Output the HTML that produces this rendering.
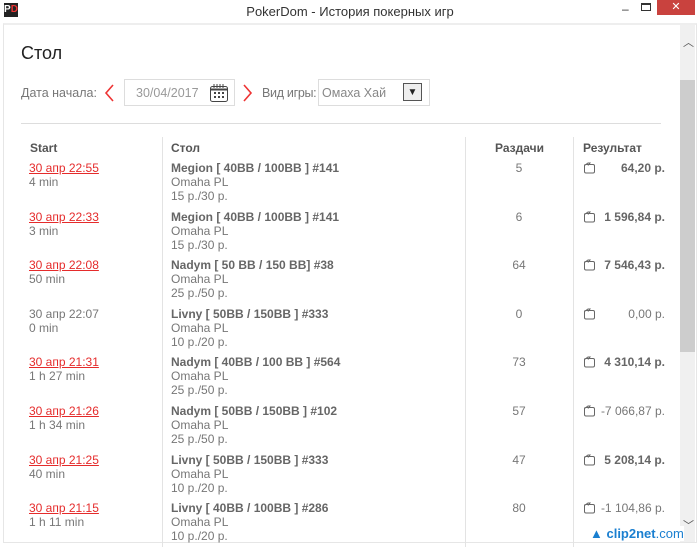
<!DOCTYPE html>
<html><head><meta charset="utf-8"><style>
*{margin:0;padding:0;box-sizing:border-box}
body{width:700px;height:547px;overflow:hidden;background:#fff;font-family:"Liberation Sans",sans-serif;color:#666;position:relative}
.tb{position:absolute;left:0;top:0;width:700px;height:23px;background:#fff}
.tt{position:absolute;left:0;width:700px;top:4px;text-align:center;font-size:13px;color:#333}
.logo{position:absolute;left:4px;top:3px;width:14px;height:14px;background:#222;color:#fff;font-size:10px;font-weight:bold;line-height:14px;text-align:center}
.logo b{color:#e33}
.cl{position:absolute;left:657px;top:0;width:38px;height:15px;background:#c9423e;color:#fff;text-align:center;font-size:11px;line-height:15px}
.frame{position:absolute;left:3px;top:23px;width:694px;height:520px;border:1px solid #e6e6e6;border-top:2px solid #eee}
.sb{position:absolute;left:680px;top:25px;width:15px;height:517px;background:#f0f0f0}
.th{position:absolute;left:680px;top:80px;width:15px;height:272px;background:#cdcdcd}
.a{position:absolute;font-size:12px}
h1{position:absolute;left:21px;top:43px;font-size:18px;font-weight:normal;color:#222}
.lbl{position:absolute;font-size:12.5px;color:#777;top:86px;white-space:nowrap}
.box{position:absolute;border:1px solid #ddd;background:#fff}
.hr{position:absolute;left:21px;top:123px;width:640px;height:1px;background:#ddd}
.vl{position:absolute;top:137px;width:1px;height:410px;background:#e3e3e3}
.hd{position:absolute;top:141px;font-size:12px;font-weight:bold;color:#555}
.r{position:absolute;font-size:12px;line-height:14px;color:#777;white-space:nowrap}
.lnk{color:#e52b2b;text-decoration:underline}
.b{font-weight:bold;color:#666}
</style></head><body>
<div class="tb"><div class="logo">P<b>D</b></div><div class="tt">PokerDom - История покерных игр</div>
<div class="a" style="left:622px;top:2px;color:#333">–</div>
<div style="position:absolute;left:641px;top:3px;width:10px;height:8px;border:1px solid #333;border-top-width:2px"></div>
<div class="cl">✕</div></div>
<div class="frame"></div>
<div class="sb"></div><div class="th"></div>
<div class="a" style="left:683px;top:34px;color:#555;font-size:11px">︿</div>
<div class="a" style="left:683px;top:517px;color:#555;font-size:11px">﹀</div>
<h1>Стол</h1>
<div class="lbl" style="left:21px">Дата начала:</div>
<svg style="position:absolute;left:103px;top:83px" width="12" height="20"><path d="M10 2 L3 10 L10 18" stroke="#e33" stroke-width="1.6" fill="none"/></svg>
<div class="box" style="left:124px;top:79px;width:111px;height:27px"></div>
<div class="lbl" style="left:136px;color:#999">30/04/2017</div>
<svg style="position:absolute;left:209px;top:83px" width="20" height="20"><rect x="1.5" y="3.5" width="17" height="15" rx="2" stroke="#444" fill="none"/><line x1="2" y1="6.5" x2="18" y2="6.5" stroke="#444" stroke-width="2"/><g fill="#444"><rect x="5" y="9" width="2" height="2"/><rect x="9" y="9" width="2" height="2"/><rect x="13" y="9" width="2" height="2"/><rect x="5" y="13" width="2" height="2"/><rect x="9" y="13" width="2" height="2"/><rect x="13" y="13" width="2" height="2"/></g><path d="M5 1v4M8 1v4M11 1v4M14 1v4" stroke="#444"/></svg>
<svg style="position:absolute;left:242px;top:83px" width="12" height="20"><path d="M2 2 L9 10 L2 18" stroke="#e33" stroke-width="1.6" fill="none"/></svg>
<div class="box" style="left:318px;top:79px;width:112px;height:27px"></div>
<div class="lbl" style="left:262px;letter-spacing:-0.3px">Вид игры:</div>
<div class="lbl" style="left:322px;color:#888">Омаха Хай</div>
<div style="position:absolute;left:403px;top:83px;width:19px;height:18px;border:1px solid #555;background:#eee;text-align:center;font-size:10px;line-height:17px;color:#222">▼</div>
<div class="hr"></div>
<div class="vl" style="left:162px"></div><div class="vl" style="left:465px"></div><div class="vl" style="left:573px"></div>
<div class="hd" style="left:30px">Start</div><div class="hd" style="left:171px">Стол</div><div class="hd" style="left:495px">Раздачи</div><div class="hd" style="left:583px">Результат</div>
<div id="rows"></div>
<script>
var d=[["30 апр 22:55",1,"4 min","Megion [ 40BB / 100BB ] #141","15 р./30 р.","5","64,20 р.",1],
["30 апр 22:33",1,"3 min","Megion [ 40BB / 100BB ] #141","15 р./30 р.","6","1 596,84 р.",1],
["30 апр 22:08",1,"50 min","Nadym [ 50 BB / 150 BB] #38","25 р./50 р.","64","7 546,43 р.",1],
["30 апр 22:07",0,"0 min","Livny [ 50BB / 150BB ] #333","10 р./20 р.","0","0,00 р.",0],
["30 апр 21:31",1,"1 h 27 min","Nadym [ 40BB / 100 BB ] #564","25 р./50 р.","73","4 310,14 р.",1],
["30 апр 21:26",1,"1 h 34 min","Nadym [ 50BB / 150BB ] #102","25 р./50 р.","57","-7 066,87 р.",0],
["30 апр 21:25",1,"40 min","Livny [ 50BB / 150BB ] #333","10 р./20 р.","47","5 208,14 р.",1],
["30 апр 21:15",1,"1 h 11 min","Livny [ 40BB / 100BB ] #286","10 р./20 р.","80","-1 104,86 р.",0]];
var h="";d.forEach(function(r,i){var y=161+i*48.6;
h+='<div class="r" style="left:29px;top:'+y+'px"><span class="'+(r[1]?'lnk':'')+'">'+r[0]+'</span><br>'+r[2]+'</div>';
h+='<div class="r" style="left:171px;top:'+y+'px"><span class="b">'+r[3]+'</span><br>Omaha PL<br>'+r[4]+'</div>';
h+='<div class="r" style="left:465px;width:108px;text-align:center;top:'+y+'px">'+r[5]+'</div>';
h+='<svg style="position:absolute;left:583px;top:'+(y+1)+'px" width="13" height="12"><path d="M1.5 3.5 L5 1 L7 1 L5 3.5 M1.5 3.5 Q1.5 2.5 3 2.5 L10 2.5 Q11.5 2.5 11.5 4 L11.5 9.5 Q11.5 11 10 11 L3 11 Q1.5 11 1.5 9.5 Z" stroke="#666" fill="none"/></svg>';
h+='<div class="r" style="left:600px;width:65px;text-align:right;top:'+y+'px"><span class="'+(r[7]?'b':'')+'">'+r[6]+'</span></div>';});
document.getElementById("rows").innerHTML=h;
</script>
<div style="position:absolute;left:590px;top:526px;font-size:13px;color:#1a7fd0;font-weight:bold;background:#fff">▲ clip2net<span style="font-weight:normal">.com</span></div>
</body></html>
